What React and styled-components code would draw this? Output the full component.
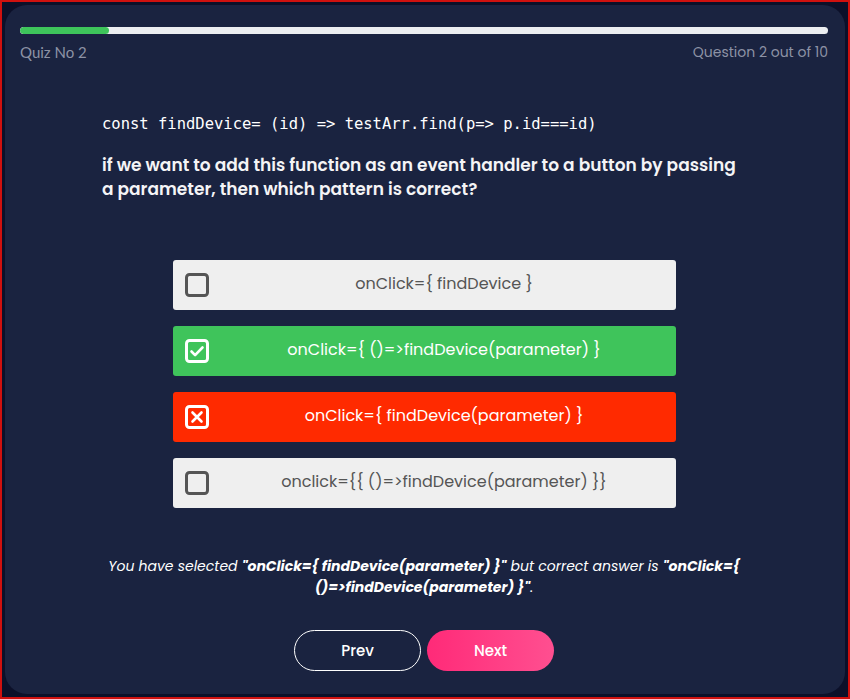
import React from 'react';
import styled, { createGlobalStyle } from 'styled-components';

const GlobalStyle = createGlobalStyle`
  html, body {
    margin: 0;
    padding: 0;
    background: #0c1029;
  }
  * { box-sizing: border-box; }
`;

const options = [
  { id: 1, label: 'onClick={ findDevice }', state: 'idle' },
  { id: 2, label: 'onClick={ ()=>findDevice(parameter) }', state: 'correct' },
  { id: 3, label: 'onClick={ findDevice(parameter) }', state: 'wrong' },
  { id: 4, label: 'onclick={{ ()=>findDevice(parameter) }}', state: 'idle' },
];

const CheckIcon = ({ state }) => {
  const stroke = state === 'idle' ? '#555555' : '#ffffff';
  return (
    <svg width="24" height="24" viewBox="0 0 24 24">
      <rect x="1.5" y="1.5" width="21" height="21" rx="3" fill="none" stroke={stroke} strokeWidth="3" />
      {state === 'correct' && (
        <path d="M6.5 12.5l3.6 3.6 7.4-7.6" fill="none" stroke="#fff" strokeWidth="2.6" strokeLinecap="round" strokeLinejoin="round" />
      )}
      {state === 'wrong' && (
        <path d="M7.5 7.5l9 9M16.5 7.5l-9 9" fill="none" stroke="#fff" strokeWidth="2.6" strokeLinecap="round" />
      )}
    </svg>
  );
};

const App = () => {
  const progress = 11;
  return (
    <Frame>
      <GlobalStyle />
      <Card>
        <Track>
          <Fill style={{ width: `${progress}%` }} />
        </Track>
        <Meta>
          <span className='quiz'>Quiz No 2</span>
          <span>Question 2 out of 10</span>
        </Meta>
        <Body>
          <Code>const findDevice= (id) =&gt; testArr.find(p=&gt; p.id===id)</Code>
          <Question>
            if we want to add this function as an event handler to a button by passing a parameter, then which pattern is correct?
          </Question>
        </Body>
        <Options>
          {options.map((o) => (
            <Option key={o.id} $state={o.state}>
              <CheckIcon state={o.state} />
              <OptionText>{o.label}</OptionText>
            </Option>
          ))}
        </Options>
        <Feedback>
          You have selected <b>"onClick={'{'} findDevice(parameter) {'}'}"</b> but correct answer is{' '}
          <b>"onClick={'{'} ()=&gt;findDevice(parameter) {'}'}"</b>.
        </Feedback>
        <Buttons>
          <NavButton>Prev</NavButton>
          <NavButton $primary>Next</NavButton>
        </Buttons>
      </Card>
    </Frame>
  );
};

export default App;

const Frame = styled.div`
  height: 699px;
  border: 2px solid #d0110f;
  padding: 3px;
  background: #0c1029;
`;

const Card = styled.div`
  height: 100%;
  border-radius: 22px;
  background: #1a2340;
  padding: 22px 17px 0 15px;
  font-family: 'Poppins', 'Inter', 'Open Sans', sans-serif;
`;

const Track = styled.div`
  height: 7px;
  border-radius: 4px;
  background: #eceef1;
  overflow: hidden;
`;

const Fill = styled.div`
  height: 100%;
  border-radius: 4px;
  background: #3ec55b;
`;

const Meta = styled.div`
  margin-top: 8px;
  display: flex;
  justify-content: space-between;
  line-height: 20px;
  font-size: 14px;
  color: #8d92a5;

  .quiz {
    font-family: 'Lato', sans-serif;
    font-size: 15px;
  }
`;

const Body = styled.div`
  width: 644px;
  margin: 52px auto 0;
`;

const Code = styled.div`
  font-family: 'DejaVu Sans Mono', 'Liberation Mono', monospace;
  font-size: 15.5px;
  line-height: 20px;
  color: #ffffff;
  white-space: pre;
`;

const Question = styled.p`
  margin: 19px 0 0;
  font-size: 17px;
  line-height: 24px;
  font-weight: 600;
  color: #f4f4f6;
`;

const Options = styled.div`
  width: 503px;
  margin: 59px auto 0;
  display: flex;
  flex-direction: column;
  gap: 16px;
`;

const optionColors = {
  idle: { bg: '#efefef', fg: '#555555' },
  correct: { bg: '#3fc45b', fg: '#ffffff' },
  wrong: { bg: '#ff2a00', fg: '#ffffff' },
};

const Option = styled.div`
  height: 50px;
  border-radius: 3px;
  display: flex;
  align-items: center;
  padding: 0 0 0 12px;
  background: ${(p) => optionColors[p.$state].bg};
  color: ${(p) => optionColors[p.$state].fg};
`;

const OptionText = styled.div`
  flex: 1;
  text-align: center;
  font-size: 16px;
  line-height: 22px;
  padding: 0 0 3px 4px;
`;

const Feedback = styled.p`
  width: 650px;
  margin: 48px auto 0;
  text-align: center;
  font-style: italic;
  font-size: 14px;
  line-height: 21px;
  color: #ffffff;

  b {
    font-weight: 700;
  }
`;

const Buttons = styled.div`
  margin-top: 32px;
  display: flex;
  justify-content: center;
  gap: 6px;
`;

const NavButton = styled.button`
  width: 127px;
  height: 41px;
  border-radius: 21px;
  font-family: inherit;
  font-size: 15px;
  font-weight: 500;
  color: #ffffff;
  cursor: pointer;
  border: ${(p) => (p.$primary ? 'none' : '1px solid #ffffff')};
  background: ${(p) => (p.$primary ? 'linear-gradient(90deg, #ff2a78, #ff4f90)' : 'transparent')};
`;
